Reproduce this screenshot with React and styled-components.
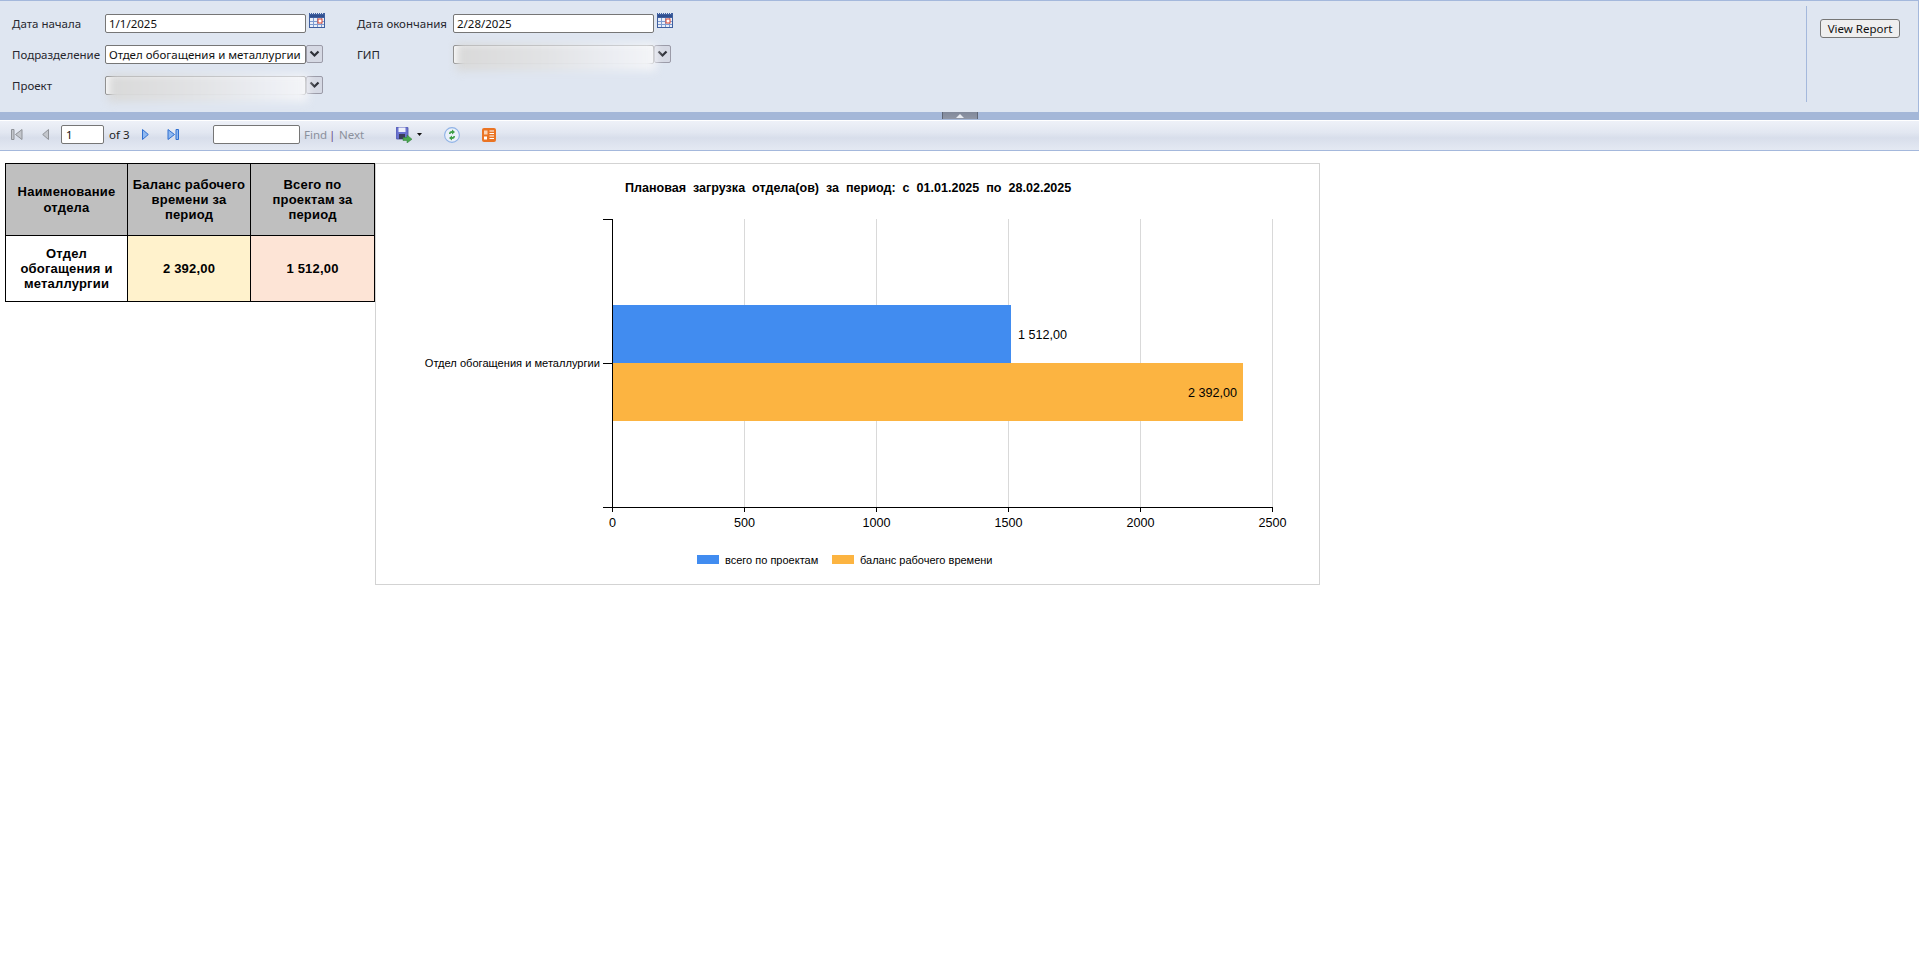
import React from "react";
import styled, { createGlobalStyle } from "styled-components";

const GlobalStyle = createGlobalStyle`
  html, body {
    margin: 0;
    padding: 0;
    height: 100%;
    background: #fff;
    overflow: hidden;
  }
  * {
    box-sizing: border-box;
  }
`;

const UI_FONT = `"Noto Sans", "DejaVu Sans", sans-serif`;
const REPORT_FONT = `"Liberation Sans", Arial, sans-serif`;

const Page = styled.div`
  display: flex;
  flex-direction: column;
  width: 1919px;
  height: 968px;
  font-family: ${UI_FONT};
  font-size: 11.5px;
  color: #222;
`;

/* parameters panel */
const ParamsPanel = styled.div`
  display: flex;
  height: 112px;
  background: #dfe6f1;
  border-top: 1px solid #a4b8dc;
  border-right: 1px solid #a4b8dc;
`;

const ParamsForm = styled.div`
  flex: 1;
  display: grid;
  grid-template-columns: 93px 252px 96px 260px;
  grid-auto-rows: 19px;
  row-gap: 12px;
  align-items: center;
  padding: 13px 0 0 12px;
`;

const ParamLabel = styled.label`
  white-space: nowrap;
  color: #26262e;
`;

const FieldRow = styled.div`
  display: flex;
  align-items: flex-start;
  height: 19px;
`;

const FieldBox = styled.div`
  position: relative;
  width: 201px;
  height: 19px;
  flex: none;
  padding: 0 3px;
  line-height: 17px;
  background: #fff;
  border: 1px solid #767676;
  border-radius: 2px;
  white-space: nowrap;
  color: #111;
`;

const BlurMask = styled.div`
  position: absolute;
  left: 2px;
  right: -3px;
  top: -3px;
  bottom: -8px;
  background: linear-gradient(90deg, #d9d9d9 0%, #e2e3e5 45%, #eceef3 80%, #f4f5f8 100%);
  filter: blur(4px);
`;

const CalendarSlot = styled.div`
  margin: -1px 0 0 3px;
  height: 15px;
`;

const DropSlot = styled.div`
  display: flex;
  align-items: center;
  justify-content: center;
  width: 17px;
  height: 18px;
  background: #d6d9e4;
  border: 1px solid #9b9ba8;
  border-radius: 2px;
`;

const ActionCell = styled.div`
  width: 112px;
  height: 96px;
  margin-top: 5px;
  padding: 13px 0 0 13px;
  border-left: 1px solid #a4b8dc;
`;

const ViewReportButton = styled.button`
  width: 80px;
  height: 19px;
  padding: 0;
  font-family: ${UI_FONT};
  font-size: 11.5px;
  line-height: 15px;
  color: #111;
  background: #efefef;
  border: 1px solid #767676;
  border-radius: 3px;
`;

/* splitter between the panel and the toolbar */
const Splitter = styled.div`
  display: flex;
  justify-content: center;
  height: 8px;
  background: #a4b7d8;
`;

const SplitterGrip = styled.div`
  display: flex;
  align-items: center;
  justify-content: center;
  width: 36px;
  height: 7px;
  background: linear-gradient(180deg, #80889a, #8f96a6);
  border-left: 1px solid #5f6675;
  border-right: 1px solid #5f6675;
`;

const GripArrow = styled.div`
  width: 0;
  height: 0;
  border-left: 4px solid transparent;
  border-right: 4px solid transparent;
  border-bottom: 4px solid #e8ebf2;
`;

/* toolbar */
const Toolbar = styled.div`
  display: flex;
  align-items: center;
  height: 30px;
  margin-top: 1px;
  padding-bottom: 2px;
  background: linear-gradient(180deg, #eef1f8 0%, #e2e7f1 40%, #d8deeb 58%, #e4e9f3 100%);
  border-bottom: 1px solid #a4b8dc;
`;

const ToolIcon = styled.div`
  flex: none;
  display: flex;
  width: ${(p) => p.$w}px;
  margin-left: ${(p) => p.$ml}px;
`;

const ToolInput = styled.div`
  flex: none;
  width: ${(p) => p.$w}px;
  height: 19px;
  margin-left: ${(p) => p.$ml}px;
  padding-left: 4px;
  line-height: 17px;
  background: #fff;
  border: 1px solid #767676;
  border-radius: 2px;
  color: #111;
`;

const ToolText = styled.span`
  flex: none;
  width: ${(p) => p.$w}px;
  margin-left: ${(p) => p.$ml}px;
  color: ${(p) => p.$color || "#222"};
  white-space: nowrap;
`;

/* report body */
const ReportArea = styled.div`
  display: flex;
  align-items: flex-start;
  padding: 12px 0 0 5px;
`;

const SummaryTable = styled.table`
  flex: none;
  width: 369px;
  table-layout: fixed;
  border-collapse: collapse;
  font-family: ${REPORT_FONT};
  font-size: 13px;
  font-weight: 700;
  line-height: 15.3px;
  letter-spacing: 0.2px;
  text-align: center;
  color: #000;
`;

const HeadCell = styled.th`
  width: ${(p) => p.$w}px;
  height: 72px;
  padding: 0;
  background: #bfbfbf;
  border: 1px solid #000;
  font-weight: 700;
`;

const BodyCell = styled.td`
  height: 66px;
  padding: 0 8px;
  background: ${(p) => p.$bg || "#fff"};
  border: 1px solid #000;
`;

const ChartFrame = styled.div`
  flex: none;
  width: 945px;
  height: 422px;
  border: 1px solid #d3d3d3;
  background: #fff;
`;

const ChartSvg = styled.svg`
  display: block;
`;

const ChartText = styled.text`
  font-family: ${REPORT_FONT};
  font-size: ${(p) => p.$size || 12.6}px;
  font-weight: ${(p) => (p.$bold ? 700 : 400)};
  white-space: pre;
  fill: #000;
`;

const CalendarIcon = () => (
  <svg width="16" height="15" viewBox="0 0 16 15">
    <rect x="0" y="0" width="16" height="15" fill="#3f5f9f" />
    <path d="M1 0.5h14" stroke="#dfe6f1" strokeWidth="1" strokeDasharray="1 1" />
    <rect x="1" y="2" width="14" height="2" fill="#2f4f8f" />
    <rect x="1" y="5" width="14" height="9" fill="#e9eef8" />
    <path d="M4.5 5v9M8.5 5v9M12.5 5v9M1 8.5h14M1 11.5h14" stroke="#7d9bd0" strokeWidth="1" />
    <rect x="9" y="6" width="4" height="4" fill="#fff" stroke="#e0452c" strokeWidth="1" />
  </svg>
);

const ChevronIcon = () => (
  <svg width="11" height="8" viewBox="0 0 11 8">
    <path d="M1.5 1.5 5.5 5.5 9.5 1.5" fill="none" stroke="#2e3038" strokeWidth="2.2" />
  </svg>
);

const FirstIcon = () => (
  <svg width="12" height="11" viewBox="0 0 12 11">
    <path d="M0.5 0.5h2.5v10h-2.5zM11 0.5v10L4.5 5.5z" fill="#c3c6cc" stroke="#8f9298" />
  </svg>
);

const PrevIcon = () => (
  <svg width="7" height="11" viewBox="0 0 7 11">
    <path d="M6.5 0.5v10L0.7 5.5z" fill="#c3c6cc" stroke="#8f9298" />
  </svg>
);

const NextIcon = () => (
  <svg width="7" height="11" viewBox="0 0 7 11">
    <path d="M0.5 0.5v10L6.3 5.5z" fill="#8fb8f0" stroke="#2f6fd0" />
  </svg>
);

const LastIcon = () => (
  <svg width="12" height="11" viewBox="0 0 12 11">
    <path d="M1 0.5v10L7.5 5.5zM9 0.5h2.5v10H9z" fill="#8fb8f0" stroke="#2f6fd0" />
  </svg>
);

const SaveIcon = () => (
  <svg width="16" height="16" viewBox="0 0 16 16">
    <rect x="0" y="0" width="12" height="12" rx="1" fill="#6a72d0" stroke="#4a50a6" strokeWidth="0.8" />
    <rect x="2.5" y="0.5" width="7" height="4.5" fill="#eef0fa" />
    <rect x="3" y="7" width="6" height="5" fill="#3a3d5a" />
    <path d="M7 10.5h4V8l5 4.2-5 3.8v-2.5H7z" fill="#4aa84e" stroke="#2f7d38" strokeWidth="0.5" />
  </svg>
);

const DropArrow = () => (
  <svg width="5" height="3" viewBox="0 0 5 3">
    <path d="M0 0h5L2.5 3z" fill="#111" />
  </svg>
);

const RefreshIcon = () => (
  <svg width="16" height="16" viewBox="0 0 16 16">
    <circle cx="8" cy="8" r="7.4" fill="#eaf0fa" stroke="#8fb2e6" strokeWidth="1.1" />
    <path d="M5 7c0-2 1-3 3-3V2.5L11 5 8 7.4V6C7 6 6.6 6.4 6.5 7z" fill="#3f9f47" />
    <path d="M11 9c0 2-1 3-3 3v1.5L5 11l3-2.4V10c1 0 1.4-.4 1.5-1z" fill="#3f9f47" />
  </svg>
);

const ExportIcon = () => (
  <svg width="14" height="14" viewBox="0 0 14 14">
    <rect x="0" y="0" width="14" height="14" rx="2" fill="#ea7424" />
    <path d="M7.5 3h4.5M7.5 5.5h4.5M7.5 8h4.5M7.5 10.5h4.5" stroke="#fff" strokeWidth="1.2" />
    <rect x="2" y="2.5" width="3.5" height="4" fill="#fbd3b4" />
    <rect x="2" y="8.5" width="3" height="3" fill="#fff" />
  </svg>
);

/* chart geometry, in page pixels minus the origin of the frame */
const ORIGIN_X = 376;
const ORIGIN_Y = 164;
const AXIS_X = 612 - ORIGIN_X;
const AXIS_TOP = 219 - ORIGIN_Y;
const AXIS_BOTTOM = 507 - ORIGIN_Y;
const UNIT = 132 / 500;
const TICKS = [0, 500, 1000, 1500, 2000, 2500];
const BARS = [
  { value: 1512, label: "1 512,00", color: "#418cf0", y: 305, h: 58 },
  { value: 2392, label: "2 392,00", color: "#fcb441", y: 363, h: 58 },
];

const BarChart = () => (
  <ChartSvg width="943" height="420" viewBox="0 0 943 420">
    <ChartText x={625 - ORIGIN_X} y={192 - ORIGIN_Y} $bold $size={12.55}>
      {"Плановая  загрузка  отдела(ов)  за  период:  с  01.01.2025  по  28.02.2025"}
    </ChartText>

    <g shapeRendering="crispEdges">
      {TICKS.slice(1).map((t) => (
        <line
          key={t}
          x1={AXIS_X + t * UNIT + 0.5}
          x2={AXIS_X + t * UNIT + 0.5}
          y1={AXIS_TOP}
          y2={AXIS_BOTTOM}
          stroke="#d9d9d9"
        />
      ))}
      {BARS.map((b) => (
        <rect
          key={b.label}
          x={AXIS_X}
          y={b.y - ORIGIN_Y}
          width={Math.round(b.value * UNIT)}
          height={b.h}
          fill={b.color}
        />
      ))}
      <line x1={AXIS_X + 0.5} x2={AXIS_X + 0.5} y1={AXIS_TOP} y2={AXIS_BOTTOM + 5} stroke="#000" />
      <line x1={AXIS_X - 9} x2={AXIS_X} y1={AXIS_TOP + 0.5} y2={AXIS_TOP + 0.5} stroke="#000" />
      <line x1={AXIS_X - 9} x2={AXIS_X} y1={363.5 - ORIGIN_Y} y2={363.5 - ORIGIN_Y} stroke="#000" />
      <line x1={AXIS_X - 9} x2={AXIS_X + 660} y1={AXIS_BOTTOM + 0.5} y2={AXIS_BOTTOM + 0.5} stroke="#000" />
      {TICKS.slice(1).map((t) => (
        <line
          key={t}
          x1={AXIS_X + t * UNIT + 0.5}
          x2={AXIS_X + t * UNIT + 0.5}
          y1={AXIS_BOTTOM}
          y2={AXIS_BOTTOM + 5}
          stroke="#000"
        />
      ))}
      <rect x={697 - ORIGIN_X} y={555 - ORIGIN_Y} width="22" height="9" fill="#418cf0" />
      <rect x={832 - ORIGIN_X} y={555 - ORIGIN_Y} width="22" height="9" fill="#fcb441" />
    </g>

    <ChartText x={600 - ORIGIN_X} y={367 - ORIGIN_Y} $size={11.1} textAnchor="end">
      Отдел обогащения и металлургии
    </ChartText>
    <ChartText x={1018 - ORIGIN_X} y={339 - ORIGIN_Y}>{BARS[0].label}</ChartText>
    <ChartText x={1237 - ORIGIN_X} y={397 - ORIGIN_Y} textAnchor="end">
      {BARS[1].label}
    </ChartText>
    {TICKS.map((t) => (
      <ChartText key={t} x={AXIS_X + t * UNIT + 0.5} y={527 - ORIGIN_Y} textAnchor="middle">
        {t}
      </ChartText>
    ))}
    <ChartText x={725 - ORIGIN_X} y={564 - ORIGIN_Y} $size={11}>всего по проектам</ChartText>
    <ChartText x={860 - ORIGIN_X} y={564 - ORIGIN_Y} $size={11}>баланс рабочего времени</ChartText>
  </ChartSvg>
);

const SelectField = ({ value, masked }) => (
  <FieldRow>
    <FieldBox>
      {value}
      {masked && <BlurMask />}
    </FieldBox>
    <DropSlot>
      <ChevronIcon />
    </DropSlot>
  </FieldRow>
);

const DateField = ({ value }) => (
  <FieldRow>
    <FieldBox>{value}</FieldBox>
    <CalendarSlot>
      <CalendarIcon />
    </CalendarSlot>
  </FieldRow>
);

export default function App() {
  return (
    <Page>
      <GlobalStyle />
      <ParamsPanel>
        <ParamsForm>
          <ParamLabel>Дата начала</ParamLabel>
          <DateField value="1/1/2025" />
          <ParamLabel>Дата окончания</ParamLabel>
          <DateField value="2/28/2025" />
          <ParamLabel>Подразделение</ParamLabel>
          <SelectField value="Отдел обогащения и металлургии" />
          <ParamLabel>ГИП</ParamLabel>
          <SelectField masked />
          <ParamLabel>Проект</ParamLabel>
          <SelectField masked />
        </ParamsForm>
        <ActionCell>
          <ViewReportButton>View Report</ViewReportButton>
        </ActionCell>
      </ParamsPanel>

      <Splitter>
        <SplitterGrip>
          <GripArrow />
        </SplitterGrip>
      </Splitter>

      <Toolbar>
        <ToolIcon $w={12} $ml={11}><FirstIcon /></ToolIcon>
        <ToolIcon $w={7} $ml={19}><PrevIcon /></ToolIcon>
        <ToolInput $w={43} $ml={12}>1</ToolInput>
        <ToolText $w={33} $ml={5}>of 3</ToolText>
        <ToolIcon $w={7} $ml={0}><NextIcon /></ToolIcon>
        <ToolIcon $w={12} $ml={18}><LastIcon /></ToolIcon>
        <ToolInput $w={87} $ml={34} />
        <ToolText $w={24} $ml={4} $color="#8b909c">Find</ToolText>
        <ToolText $w={10} $ml={1} $color="#6a4a8a">|</ToolText>
        <ToolText $w={30} $ml={0} $color="#8b909c">Next</ToolText>
        <ToolIcon $w={16} $ml={27}><SaveIcon /></ToolIcon>
        <ToolIcon $w={5} $ml={5}><DropArrow /></ToolIcon>
        <ToolIcon $w={16} $ml={22}><RefreshIcon /></ToolIcon>
        <ToolIcon $w={14} $ml={22}><ExportIcon /></ToolIcon>
      </Toolbar>

      <ReportArea>
        <SummaryTable>
          <thead>
            <tr>
              <HeadCell $w={122}>Наименование отдела</HeadCell>
              <HeadCell $w={123}>Баланс рабочего времени за период</HeadCell>
              <HeadCell $w={124}>Всего по проектам за период</HeadCell>
            </tr>
          </thead>
          <tbody>
            <tr>
              <BodyCell>Отдел обогащения и металлургии</BodyCell>
              <BodyCell $bg="#fff2cc">2 392,00</BodyCell>
              <BodyCell $bg="#fde4d6">1 512,00</BodyCell>
            </tr>
          </tbody>
        </SummaryTable>
        <ChartFrame>
          <BarChart />
        </ChartFrame>
      </ReportArea>
    </Page>
  );
}
